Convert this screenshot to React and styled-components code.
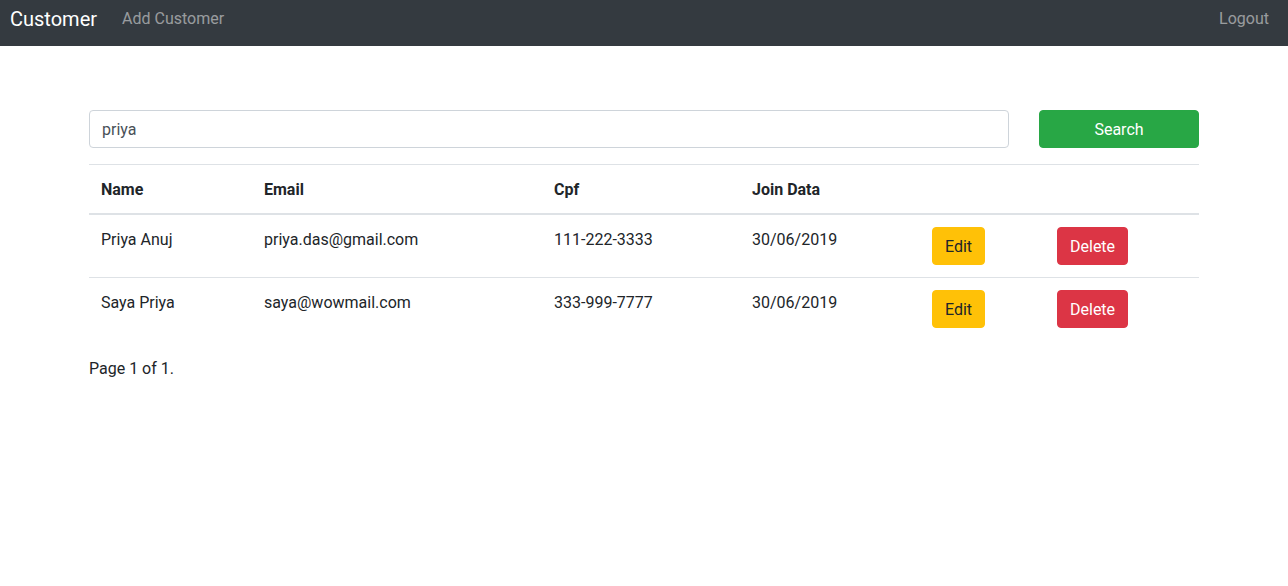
import React from "react";
import styled, { createGlobalStyle } from "styled-components";

const GlobalStyle = createGlobalStyle`
  * { box-sizing: border-box; }
  body {
    margin: 0;
    font-family: Roboto, "Liberation Sans", Arial, sans-serif;
    font-size: 16px;
    line-height: 1.5;
    color: #212529;
    background: #fff;
  }
`;

const Navbar = styled.nav`
  display: flex;
  align-items: center;
  height: 46px;
  padding: 0 11px 8px 10px;
  background-color: #343a40;
`;

const Brand = styled.a`
  font-size: 20px;
  line-height: 30px;
  color: #fff;
  margin-right: 17px;
  text-decoration: none;
`;

const NavLink = styled.a`
  padding: 0 8px;
  line-height: 24px;
  color: rgba(255, 255, 255, 0.5);
  text-decoration: none;
  margin-left: ${p => (p.right ? "auto" : "0")};
`;

const Container = styled.div`
  width: 1140px;
  margin: 0 auto;
  padding: 64px 15px 0;
`;

const SearchRow = styled.form`
  display: grid;
  grid-template-columns: 920px 160px;
  column-gap: 30px;
  margin-bottom: 16px;
`;

const Input = styled.input`
  height: 38px;
  padding: 6px 12px;
  font-family: inherit;
  font-size: 16px;
  color: #495057;
  border: 1px solid #ced4da;
  border-radius: 4px;
  outline: none;
`;

const Button = styled.button`
  height: 38px;
  padding: 7px 12px 5px;
  font-family: inherit;
  font-size: 16px;
  line-height: 24px;
  border: 1px solid ${p => p.bg};
  border-radius: 4px;
  background-color: ${p => p.bg};
  color: ${p => p.fg};
  cursor: pointer;
  width: ${p => (p.block ? "100%" : "auto")};
`;

const Table = styled.table`
  width: 100%;
  table-layout: fixed;
  border-collapse: collapse;
  margin-bottom: 16px;
`;

const Th = styled.th`
  text-align: left;
  font-weight: 700;
  padding: 13px 12px 11px;
  vertical-align: bottom;
  border-top: 1px solid #dee2e6;
  border-bottom: 2px solid #dee2e6;
`;

const Td = styled.td`
  padding: 12px;
  vertical-align: top;
  border-top: 1px solid #dee2e6;
`;

const CellText = styled.span`
  display: block;
  padding-top: 1px;
  margin-bottom: -1px;
`;

const Footer = styled.p`
  margin: 0;
  padding-top: 1px;
`;

const customers = [
  { name: "Priya Anuj", email: "priya.das@gmail.com", cpf: "111-222-3333", date: "30/06/2019" },
  { name: "Saya Priya", email: "saya@wowmail.com", cpf: "333-999-7777", date: "30/06/2019" }
];

export default function App() {
  return (
    <>
      <GlobalStyle />
      <Navbar>
        <Brand href="#">Customer</Brand>
        <NavLink href="#">Add Customer</NavLink>
        <NavLink href="#" right>Logout</NavLink>
      </Navbar>
      <Container>
        <SearchRow onSubmit={e => e.preventDefault()}>
          <Input defaultValue="priya" />
          <Button bg="#28a745" fg="#fff" block>Search</Button>
        </SearchRow>
        <Table>
          <colgroup>
            <col style={{ width: 163 }} />
            <col style={{ width: 290 }} />
            <col style={{ width: 198 }} />
            <col style={{ width: 180 }} />
            <col style={{ width: 125 }} />
            <col />
          </colgroup>
          <thead>
            <tr>
              <Th>Name</Th>
              <Th>Email</Th>
              <Th>Cpf</Th>
              <Th>Join Data</Th>
              <Th />
              <Th />
            </tr>
          </thead>
          <tbody>
            {customers.map(c => (
              <tr key={c.email}>
                <Td><CellText>{c.name}</CellText></Td>
                <Td><CellText>{c.email}</CellText></Td>
                <Td><CellText>{c.cpf}</CellText></Td>
                <Td><CellText>{c.date}</CellText></Td>
                <Td>
                  <Button bg="#ffc107" fg="#212529">Edit</Button>
                </Td>
                <Td>
                  <Button bg="#dc3545" fg="#fff">Delete</Button>
                </Td>
              </tr>
            ))}
          </tbody>
        </Table>
        <Footer>Page 1 of 1.</Footer>
      </Container>
    </>
  );
}
